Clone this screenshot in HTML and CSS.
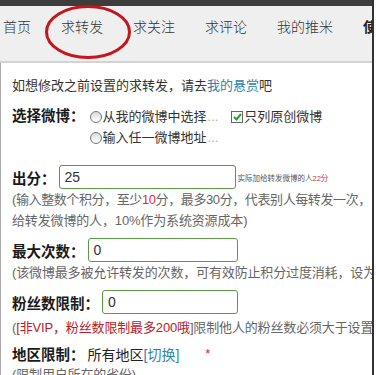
FILE: index.html
```html
<!DOCTYPE html>
<html lang="zh-CN">
<head>
  <meta charset="UTF-8" />
  <meta name="viewport" content="width=device-width, initial-scale=1.0"/>
  <title>求转发</title>
  <link rel="stylesheet" href="styles.css">
</head>
<body>
  <div class="page">
    <div class="topbar"></div>

    <nav class="nav">
      <a href="#">首页</a>
      <a href="#" class="current">求转发</a>
      <a href="#">求关注</a>
      <a href="#">求评论</a>
      <a href="#">我的推米</a>
      <a href="#" class="strong">使用</a>
      <!-- red marker drawn over the current tab -->
      <svg class="marker" width="92" height="58" viewBox="0 0 92 58">
        <ellipse cx="46" cy="29" rx="41.5" ry="25.5" fill="none" stroke="#c3161d" stroke-width="3"/>
      </svg>
    </nav>

    <div class="form">
      <p class="tip">如想修改之前设置的求转发，请去<a href="#">我的悬赏</a>吧</p>

      <div class="choose">
        <span class="label">选择微博：</span>
        <div class="options">
          <div class="opt"><span class="radio"></span>从我的微博中选择<span class="dots">...</span>
            <span class="check"><svg width="9" height="8" viewBox="0 0 9 8"><path d="M1 4 L3.5 6.5 L8 1" fill="none" stroke="#2f9a2f" stroke-width="2"/></svg></span>只列原创微博
          </div>
          <div class="opt"><span class="radio"></span>输入任一微博地址<span class="dots">...</span></div>
        </div>
      </div>

      <div class="row first">
        <span class="label">出分：</span>
        <div class="input w-score">25</div>
        <span class="tiny">实际加给转发微博的人<em>22分</em></span>
      </div>
      <div class="help">
        <span class="tight">(输入整数个积分，至少<em>10</em>分，最多30分，代表别人每转发一次，</span>
        <span>给转发微博的人，10%作为系统资源成本)</span>
      </div>

      <div class="row">
        <span class="label">最大次数：</span>
        <div class="input w-times">0</div>
      </div>
      <div class="help">
        <span>(该微博最多被允许转发的次数，可有效防止积分过度消耗，设为</span>
      </div>

      <div class="row">
        <span class="label">粉丝数限制：</span>
        <div class="input w-fans">0</div>
      </div>
      <div class="help fans">
        <span>(<em>[非VIP，粉丝数限制最多200哦</em>]限制他人的粉丝数必须大于设置</span>
      </div>

      <div class="row area">
        <span class="label">地区限制：</span>
        <span class="value">所有地区</span><a href="#">[切换]</a><span class="star">*</span>
      </div>
      <div class="help">
        <span>(限制用户所在的省份)</span>
      </div>
    </div>
  </div>
</body>
</html>
```

FILE: styles.css
```css
* { box-sizing: border-box; }
body {
  margin: 0;
  background: #fff;
  font-family: "Liberation Sans", "Noto Sans CJK SC", sans-serif;
  color: #333;
  overflow: hidden;
}
.page {
  width: 374px;
  height: 375px;
  border-right: 2px solid #333;
  overflow: hidden;
}
.topbar {
  height: 6px;
  background: #3d3d3d;
}
.nav {
  position: relative;
  height: 57px;
  background: #efefef;
  border-bottom: 2px solid #d3d3d3;
  display: flex;
  gap: 30px;
  padding: 11px 0 0 3px;
  white-space: nowrap;
}
.nav a {
  font-size: 14px;
  font-weight: 300;
  line-height: 20px;
  color: #333;
  text-decoration: none;
}
.nav a.strong {
  font-weight: bold;
  color: #222;
}
.marker {
  position: absolute;
  left: 42px;
  top: -3px;
}
.form {
  border-left: 1px solid #aaa;
  padding-left: 11px;
  font-size: 13px;
  white-space: nowrap;
}
.tip {
  margin: 0;
  padding-top: 13px;
  line-height: 20px;
}
.tip a, .area a {
  color: #2f84ad;
  text-decoration: none;
}
.label {
  font-size: 14.5px;
  font-weight: bold;
  color: #1a1a1a;
  margin-right: 3px;
}
.choose {
  display: flex;
  margin-top: 10px;
  line-height: 21px;
}
.choose .label {
  margin-right: 5px;
}
.opt {
  display: flex;
  align-items: center;
  height: 21px;
}
.radio {
  width: 12px;
  height: 12px;
  margin-right: 1px;
  border: 1px solid #777;
  border-radius: 50%;
  background: linear-gradient(#dcdcdc, #fff);
}
.dots {
  color: #aaa;
  margin-left: 1px;
  margin-right: 13px;
}
.check {
  width: 12px;
  height: 12px;
  margin-right: 1px;
  border: 1px solid #666;
  background: #fff;
  display: flex;
  align-items: center;
  justify-content: center;
}
.row {
  display: flex;
  align-items: center;
  height: 24px;
  margin-top: 7px;
}
.row.first {
  margin-top: 17px;
}
.input {
  height: 24px;
  border: 1px solid #5c9a45;
  border-radius: 3px;
  padding-left: 5px;
  font-size: 14px;
  line-height: 22px;
  color: #333;
}
.w-score { width: 177px; }
.w-times { width: 150px; }
.w-fans { width: 136px; }
.tiny {
  font-size: 7.5px;
  color: #555;
  margin-left: 2px;
}
.tiny em, .help em {
  font-style: normal;
  color: #cf2f45;
}
.help {
  color: #666;
  line-height: 21px;
  letter-spacing: -0.15px;
}
.help span {
  display: block;
}
.help .tight {
  letter-spacing: -0.4px;
}
.help.fans {
  margin-top: 3px;
}
.help.fans em {
  color: #b8202b;
}
.area {
  margin-top: 5px;
  height: 21px;
}
.value {
  font-size: 14px;
  color: #222;
}
.area a {
  font-size: 14px;
}
.star {
  color: #c03030;
  margin-left: 26px;
}
```
